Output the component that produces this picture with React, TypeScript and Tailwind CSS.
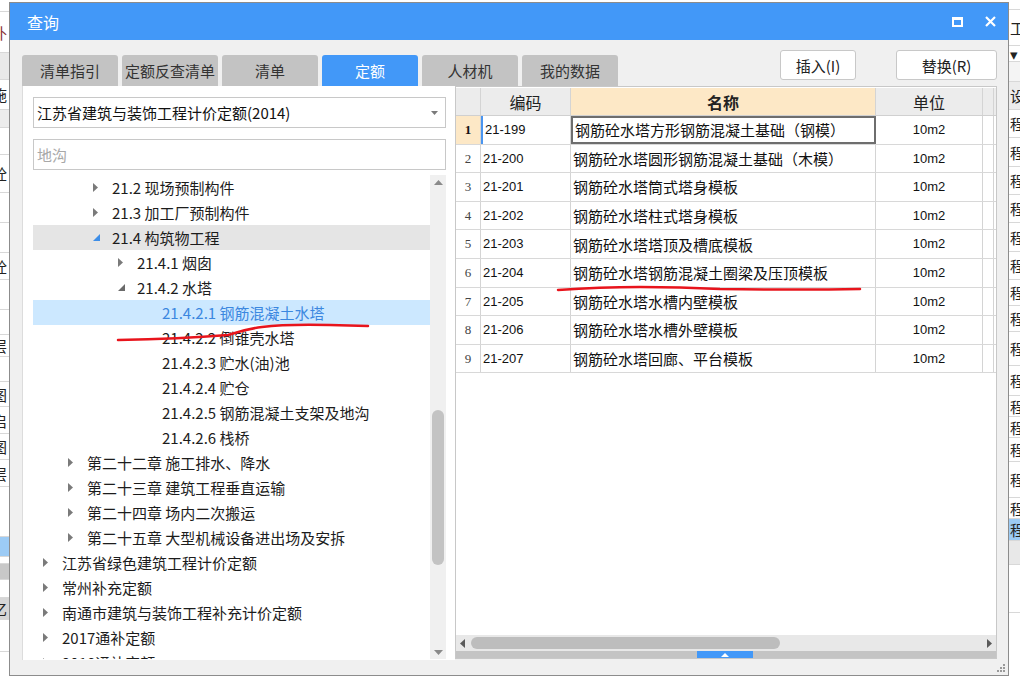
const FONT = "font-['Noto_Sans_CJK_SC','Noto_Sans',sans-serif]";

type Node = { lv: number; ar?: 'r' | 'd'; t: string; hl?: 'grey' | 'blue'; blueArrow?: boolean };

const tree: Node[] = [
  { lv: 2, ar: 'r', t: '21.2 现场预制构件' },
  { lv: 2, ar: 'r', t: '21.3 加工厂预制构件' },
  { lv: 2, ar: 'd', t: '21.4 构筑物工程', hl: 'grey', blueArrow: true },
  { lv: 3, ar: 'r', t: '21.4.1 烟囱' },
  { lv: 3, ar: 'd', t: '21.4.2 水塔' },
  { lv: 4, t: '21.4.2.1 钢筋混凝土水塔', hl: 'blue' },
  { lv: 4, t: '21.4.2.2 倒锥壳水塔' },
  { lv: 4, t: '21.4.2.3 贮水(油)池' },
  { lv: 4, t: '21.4.2.4 贮仓' },
  { lv: 4, t: '21.4.2.5 钢筋混凝土支架及地沟' },
  { lv: 4, t: '21.4.2.6 栈桥' },
  { lv: 1, ar: 'r', t: '第二十二章 施工排水、降水' },
  { lv: 1, ar: 'r', t: '第二十三章 建筑工程垂直运输' },
  { lv: 1, ar: 'r', t: '第二十四章 场内二次搬运' },
  { lv: 1, ar: 'r', t: '第二十五章 大型机械设备进出场及安拆' },
  { lv: 0, ar: 'r', t: '江苏省绿色建筑工程计价定额' },
  { lv: 0, ar: 'r', t: '常州补充定额' },
  { lv: 0, ar: 'r', t: '南通市建筑与装饰工程补充计价定额' },
  { lv: 0, ar: 'r', t: '2017通补定额' },
  { lv: 0, ar: 'r', t: '2018通补定额' },
];

const indent = ['pl-[8px]', 'pl-[33px]', 'pl-[58px]', 'pl-[83px]', 'pl-[108px]'];

const rows = [
  ['21-199', '钢筋砼水塔方形钢筋混凝土基础（钢模）'],
  ['21-200', '钢筋砼水塔圆形钢筋混凝土基础（木模）'],
  ['21-201', '钢筋砼水塔筒式塔身模板'],
  ['21-202', '钢筋砼水塔柱式塔身模板'],
  ['21-203', '钢筋砼水塔塔顶及槽底模板'],
  ['21-204', '钢筋砼水塔钢筋混凝土圈梁及压顶模板'],
  ['21-205', '钢筋砼水塔水槽内壁模板'],
  ['21-206', '钢筋砼水塔水槽外壁模板'],
  ['21-207', '钢筋砼水塔回廊、平台模板'],
];

const tabs = ['清单指引', '定额反查清单', '清单', '定额', '人材机', '我的数据'];

// background app peeking out on both sides
const leftStrip: [number, string, string?][] = [
  [12, '#ffffff'], [41, '#ffffff', '补'], [27, '#e9e9e9'], [30, '#ffffff', '施'], [18, '#ececec'],
  [27, '#ffffff'], [38, '#ffffff', '砼'], [30, '#ffffff'], [30, '#ffffff'], [27, '#ffffff', '砼'],
  [30, '#ffffff'], [25, '#ffffff'], [22, '#ffffff', '层'], [25, '#ffffff'], [25, '#ffffff', '图'],
  [27, '#ffffff', '启'], [26, '#ffffff', '图'], [27, '#ffffff', '层'], [50, '#ffffff'], [20, '#9ccbf5'],
  [7, '#ffffff'], [16, '#c8c8c8'], [18, '#ffffff'], [22, '#d6d6d6', '亿'], [32, '#ffffff'],
];

const rightStrip: [number, string, string?][] = [
  [10, '#ffffff'], [36, '#ffffff', '工具'], [16, '#ffffff', '▾'], [20, '#f4f4f4'], [28, '#ececec', '设专'],
  [28, '#ffffff', '程'], [29, '#ffffff', '程'], [28, '#ffffff', '程'], [28, '#ffffff', '程'],
  [29, '#ffffff', '程'], [28, '#ffffff', '程'], [26, '#ffffff', '程'], [26, '#ffffff', '程'],
  [34, '#ffffff', '程'], [30, '#ffffff', '程'], [21, '#ffffff', '程'], [21, '#ffffff', '程'],
  [24, '#ffffff', '程'], [36, '#ffffff', '程'], [21, '#ffffff', '程'], [22, '#9ccbf5', '程'],
  [24, '#e8e8e8'], [48, '#ffffff'],
];

function Strip({ items, side }: { items: [number, string, string?][]; side: 'l' | 'r' }) {
  return (
    <div className={`flex flex-col overflow-hidden ${side === 'l' ? 'w-[9px]' : 'w-[11px]'}`}>
      {items.map(([h, bg, t], i) => (
        <div
          key={i}
          style={{ height: h, background: bg }}
          className="shrink-0 border-b border-[#d8d8d8] flex items-center overflow-hidden text-[15px] leading-none text-[#222]"
        >
          {t && (
            <span className={`whitespace-nowrap ${side === 'l' ? 'ml-[-8px]' : 'ml-[1px]'} ${t === '补' ? 'text-[#8a3030]' : ''}`}>
              {t}
            </span>
          )}
        </div>
      ))}
    </div>
  );
}

function Arrow({ kind, blue }: { kind?: 'r' | 'd'; blue?: boolean }) {
  if (!kind) return <span className="w-[21px] shrink-0" />;
  return (
    <span className="w-[21px] shrink-0 flex items-center pl-[2px]">
      {kind === 'r' ? (
        <svg width="6" height="9" viewBox="0 0 6 9">
          <polygon points="0,0 5,4.5 0,9" fill="#7a7a7a" />
        </svg>
      ) : (
        <svg width="7" height="7" viewBox="0 0 7 7">
          <polygon points="7,0 7,7 0,7" fill={blue ? '#3d8ee8' : '#6a6a6a'} />
        </svg>
      )}
    </span>
  );
}

function LeftPanel() {
  return (
    <div className="w-[433px] h-full bg-white border-l border-[#dcdcdc] pl-[10px] pt-[11px] flex flex-col">
      <div className="w-[413px] h-[31px] border border-[#c8c8c8] flex items-center justify-between pl-[3px] pr-[7px]">
        <span className="text-[15px] text-[#111] leading-none">江苏省建筑与装饰工程计价定额(2014)</span>
        <svg width="7" height="4" viewBox="0 0 7 4">
          <polygon points="0,0 7,0 3.5,4" fill="#7a7a7a" />
        </svg>
      </div>
      <div className="mt-[11px] w-[413px] h-[31px] border border-[#c8c8c8] flex items-center pl-[3px]">
        <span className="text-[15px] text-[#a8a8a8] leading-none">地沟</span>
      </div>
      <div className="mt-[5px] w-[413px] h-[484px] flex">
        <div className="w-[397px] h-full overflow-hidden flex flex-col">
          {tree.map((n, i) => (
            <div
              key={i}
              className={`h-[25px] shrink-0 flex items-center ${indent[n.lv]} ${
                n.hl === 'grey' ? 'bg-[#e5e5e5]' : n.hl === 'blue' ? 'bg-[#cce8ff]' : ''
              }`}
            >
              <Arrow kind={n.ar} blue={n.blueArrow} />
              <span className={`text-[15px] leading-none whitespace-nowrap ${n.hl === 'blue' ? 'text-[#3b87df]' : 'text-[#1c1c1c]'}`}>
                {n.t}
              </span>
            </div>
          ))}
        </div>
        <div className="w-[16px] h-full bg-[#f0f0f0] flex flex-col items-center">
          <div className="h-[14px] flex items-center">
            <svg width="9" height="5" viewBox="0 0 9 5">
              <polygon points="0,5 9,5 4.5,0" fill="#8a8a8a" />
            </svg>
          </div>
          <div className="mt-[221px] w-[12px] h-[155px] rounded-full bg-[#c3c3c3]" />
          <div className="flex-1" />
          <div className="h-[14px] flex items-center">
            <svg width="9" height="5" viewBox="0 0 9 5">
              <polygon points="0,0 9,0 4.5,5" fill="#8a8a8a" />
            </svg>
          </div>
        </div>
      </div>
    </div>
  );
}

function RightPanel() {
  return (
    <div className="w-[542px] h-[573px] border border-[#c8c8c8] bg-white flex flex-col pt-[1px]">
      <div className="h-[28px] shrink-0 flex bg-[#ececec] border-b border-[#d0d0d0] text-[16px] leading-none text-[#222]">
        <div className="w-[25px] border-r border-[#d4d4d4]" />
        <div className="w-[90px] border-r border-[#d4d4d4] flex items-center justify-center">编码</div>
        <div className="w-[305px] border-r border-[#d4d4d4] bg-[#fde8c6] flex items-center justify-center font-bold">名称</div>
        <div className="w-[107px] border-r border-[#d4d4d4] flex items-center justify-center">单位</div>
        <div className="w-[11px] border-r border-[#d4d4d4]" />
      </div>
      {rows.map(([code, name], i) => (
        <div key={i} className="h-[28.6px] shrink-0 flex border-b border-[#d8d8d8]">
          <div
            className={`w-[25px] border-r border-[#d4d4d4] flex items-center justify-center text-[13px] font-['Liberation_Serif',serif] ${
              i === 0 ? 'bg-[#fde8c6] font-bold text-[#111]' : 'text-[#444]'
            }`}
          >
            {i + 1}
          </div>
          <div
            className={`w-[90px] border-r border-[#d4d4d4] flex items-center pl-[2px] text-[13px] font-['Liberation_Sans',sans-serif] text-[#111] ${
              i === 0 ? 'border-l-2 border-l-[#4a95f0]' : ''
            }`}
          >
            {code}
          </div>
          <div
            className={`w-[305px] flex items-center pl-[2px] text-[15px] leading-none text-[#111] whitespace-nowrap ${
              i === 0 ? 'border-2 border-[#6e6e6e]' : 'border-r border-[#d4d4d4]'
            }`}
          >
            {name}
          </div>
          <div className="w-[107px] border-r border-[#d4d4d4] flex items-center justify-center text-[13px] font-['Liberation_Sans',sans-serif] text-[#111]">
            10m2
          </div>
          <div className="w-[11px] border-r border-[#d4d4d4]" />
        </div>
      ))}
      <div className="flex-1" />
      <div className="h-[16px] bg-[#e8e8e8] flex items-center px-[4px]">
        <svg width="5" height="9" viewBox="0 0 5 9">
          <polygon points="5,0 0,4.5 5,9" fill="#5a5a5a" />
        </svg>
        <div className="ml-[6px] w-[309px] h-[12px] rounded-full bg-[#bdbdbd]" />
        <div className="flex-1" />
        <svg width="5" height="9" viewBox="0 0 5 9">
          <polygon points="0,0 5,4.5 0,9" fill="#5a5a5a" />
        </svg>
      </div>
      <div className="h-[7px] bg-[#c4c4c4] flex justify-center pr-[2px]">
        <div className="w-[56px] h-full bg-[#4298f8] flex items-center justify-center">
          <svg width="8" height="4" viewBox="0 0 8 4">
            <polygon points="0,4 8,4 4,0" fill="#ffffff" />
          </svg>
        </div>
      </div>
    </div>
  );
}

export default function App() {
  return (
    <div className={`relative w-[1020px] h-[689px] bg-white flex overflow-hidden ${FONT}`}>
      <Strip items={leftStrip} side="l" />

      <div className="w-[1000px] h-[674px] mt-[2px] border border-[#8c8c8c] bg-[#f0f0f0] flex flex-col shrink-0">
        <div className="h-[37px] bg-[#4298f8] flex items-center justify-between pl-[17px] pr-[12px]">
          <span className="text-[16px] text-white leading-none">查询</span>
          <div className="flex items-center gap-[22px]">
            <div className="w-[11px] h-[10px] border-2 border-white border-t-[3px]" />
            <svg width="11" height="11" viewBox="0 0 11 11">
              <path d="M1 1 L10 10 M10 1 L1 10" stroke="#ffffff" strokeWidth="2.2" />
            </svg>
          </div>
        </div>

        <div className="h-[46px] flex justify-between pl-[12px] pr-[11px]">
          <div className="self-end flex gap-[4px]">
            {tabs.map((t) => (
              <div
                key={t}
                className={`w-[96px] h-[31px] rounded-t-[3px] flex items-center justify-center text-[15px] leading-none ${
                  t === '定额' ? 'bg-[#4298f8] text-white' : 'bg-[#c3c3c3] text-[#333]'
                }`}
              >
                {t}
              </div>
            ))}
          </div>
          <div className="mt-[10px] flex gap-[40px]">
            <div className="w-[76px] h-[30px] bg-white border border-[#c8c8c8] rounded-[3px] flex items-center justify-center text-[15px] leading-none text-[#222]">
              插入(I)
            </div>
            <div className="w-[101px] h-[30px] bg-white border border-[#c8c8c8] rounded-[3px] flex items-center justify-center text-[15px] leading-none text-[#222]">
              替换(R)
            </div>
          </div>
        </div>

        <div className="h-[574px] flex pl-[12px] pr-[11px]">
          <LeftPanel />
          <RightPanel />
        </div>

        <div className="flex-1 flex justify-end items-end pr-[3px] pb-[3px]">
          <svg width="9" height="9" viewBox="0 0 9 9">
            <g fill="#9a9a9a">
              <rect x="7" y="1" width="2" height="2" />
              <rect x="4" y="4" width="2" height="2" />
              <rect x="7" y="4" width="2" height="2" />
              <rect x="1" y="7" width="2" height="2" />
              <rect x="4" y="7" width="2" height="2" />
              <rect x="7" y="7" width="2" height="2" />
            </g>
          </svg>
        </div>
      </div>

      <Strip items={rightStrip} side="r" />

      <svg className="absolute inset-0 pointer-events-none" width="1020" height="689" viewBox="0 0 1020 689">
        <path d="M118 340 Q180 339 228 335 Q246 329 262 327 Q285 324 330 325 L368 326" stroke="#e8141c" strokeWidth="2.5" fill="none" strokeLinecap="round" />
        <path d="M558 290 Q600 287 640 287 Q680 287 720 289 Q800 290 860 289" stroke="#e8141c" strokeWidth="2.5" fill="none" strokeLinecap="round" />
      </svg>
    </div>
  );
}
